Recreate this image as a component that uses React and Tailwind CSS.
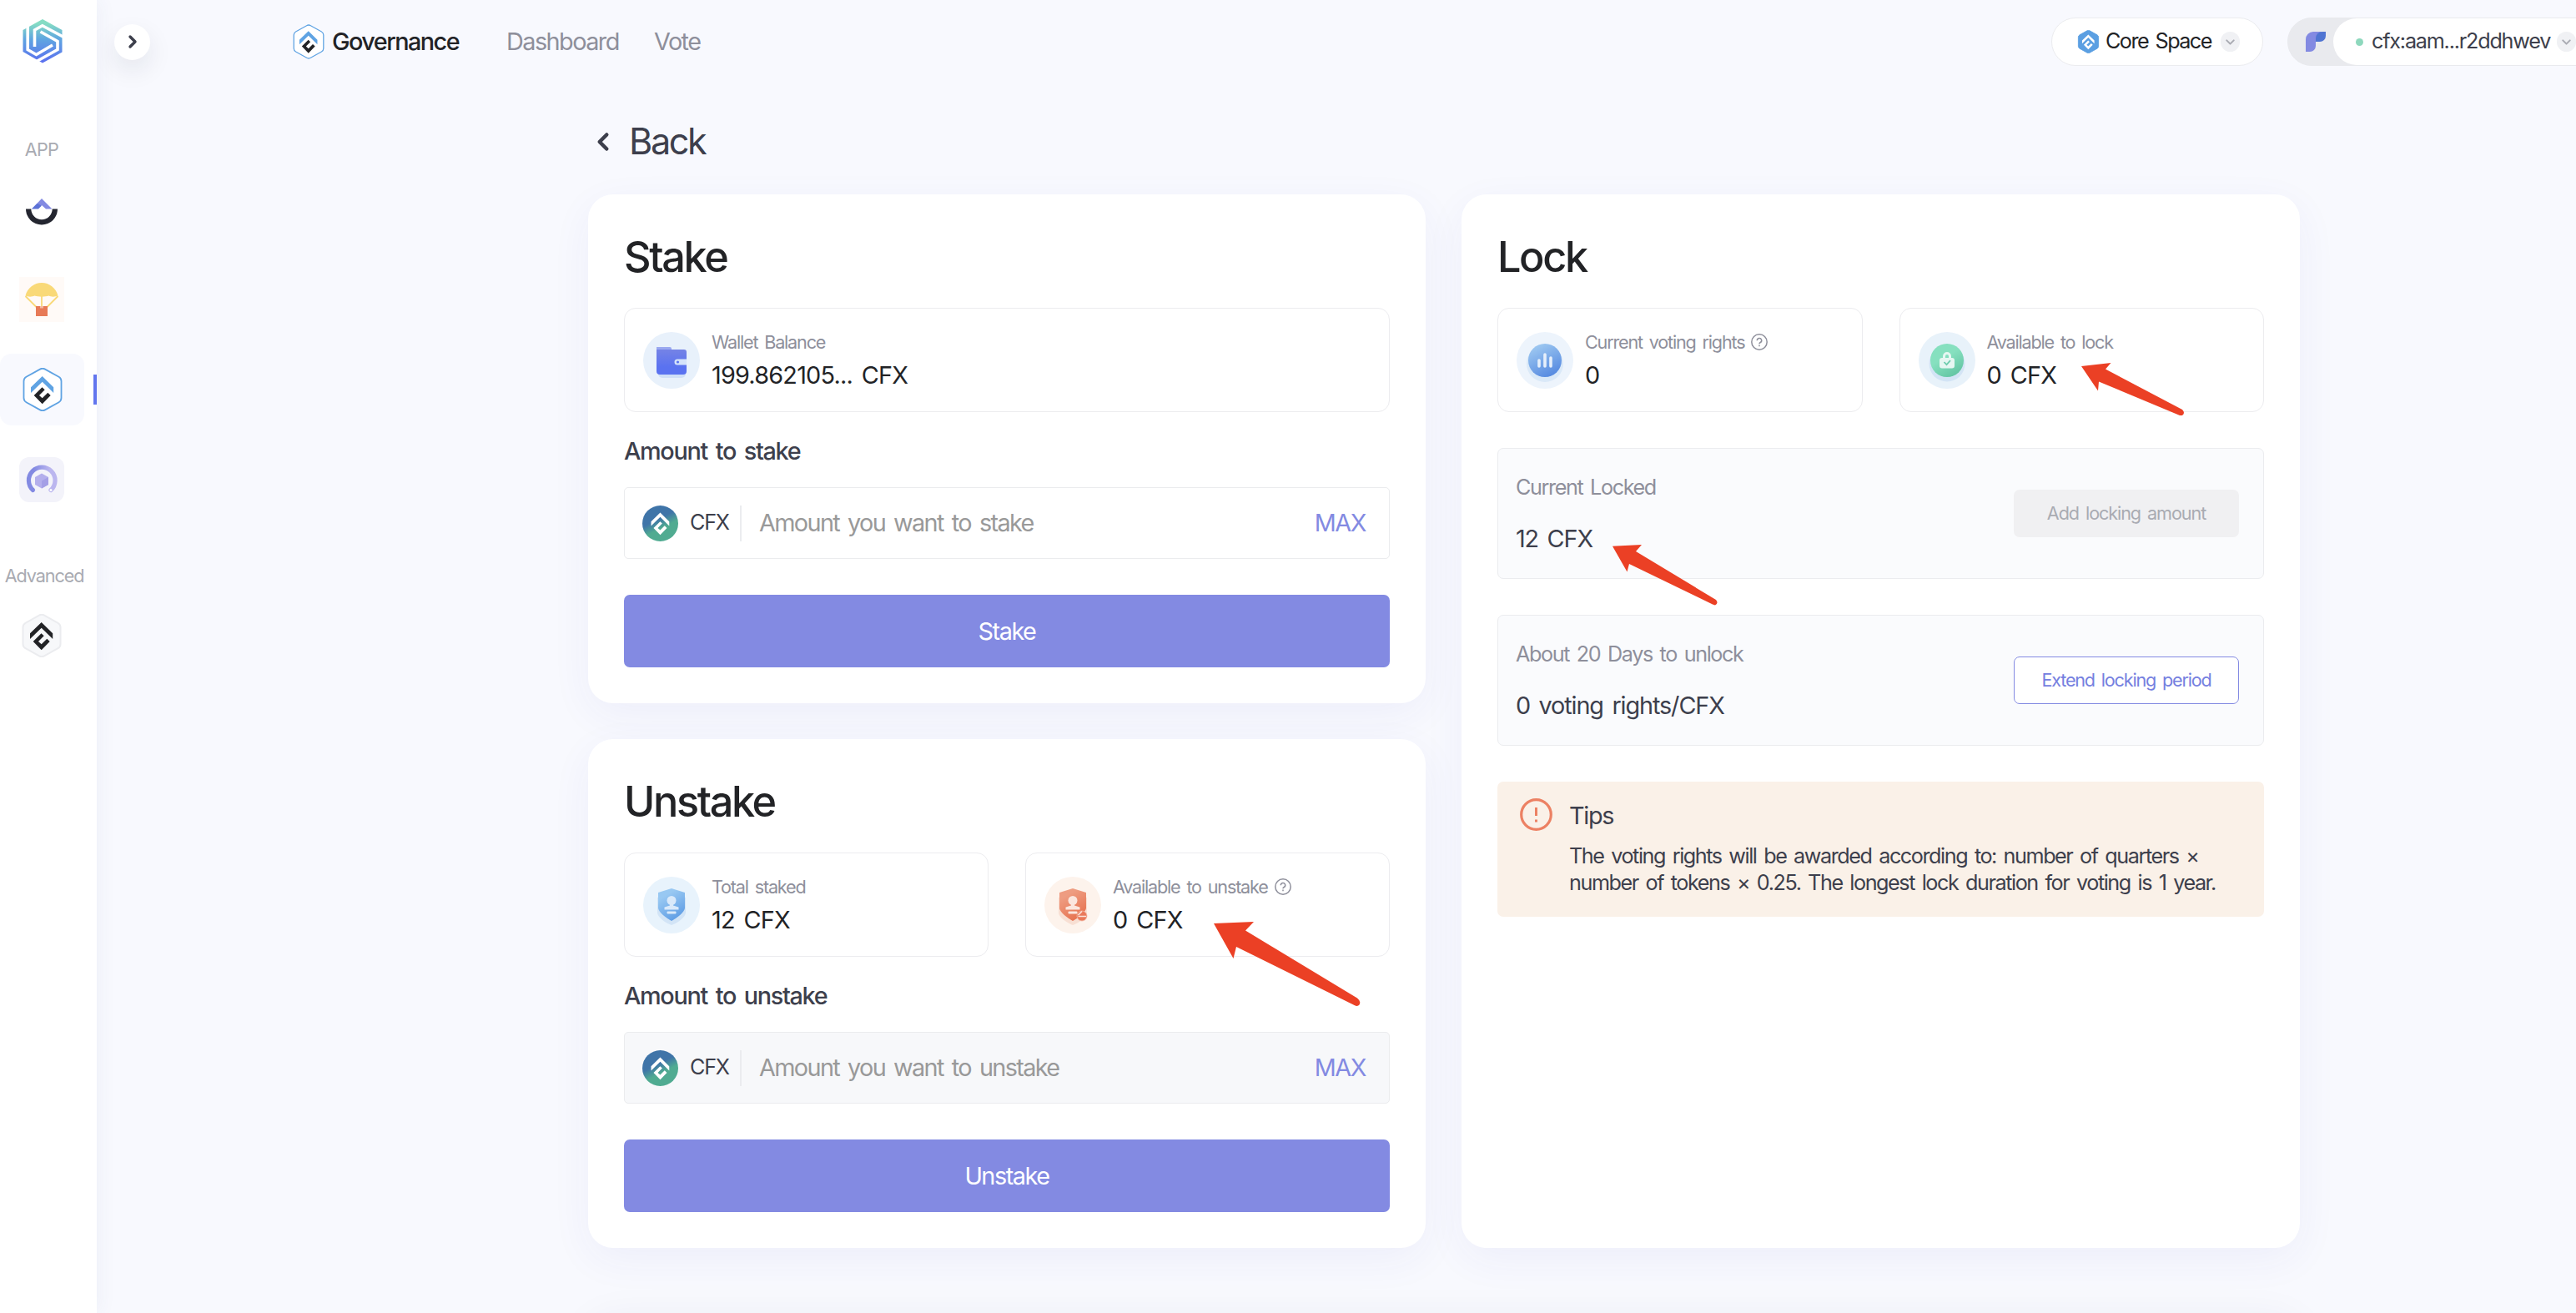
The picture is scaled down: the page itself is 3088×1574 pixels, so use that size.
import React from "react";
import { ChevronDown, ChevronLeft, ChevronRight } from "lucide-react";

// --------------------
// ICONS
// --------------------
const HEX = "M21 1.6a6 6 0 0 1 6 0l16.500 9.200a6 6 0 0 1 3 5.200v20a6 6 0 0 1-3 5.200l-16.500 9.200a6 6 0 0 1-6 0l-16.500-9.200a6 6 0 0 1-3-5.200v-20a6 6 0 0 1 3-5.200z";

function Mark({ top, bottom }) {
  return (
    <>
      <path d="M23.700 10 37.200 23.300V30L23.700 16.700 10 30v-6.700z" fill={top} />
      <path d="m23.500 23.300-9.800 9.700 10 10.300 10-10.300-3.400-3.300-6.600 6.600-3.700-3.300 6.700-6.700z" fill={bottom} />
    </>
  );
}

const HexLogo = ({ className, stroke, fill, top, bottom, strokeWidth = 1.6 }) => (
  <svg viewBox="0 0 48 52" className={className}>
    <path d={HEX} fill={fill} stroke={stroke} strokeWidth={strokeWidth} />
    <Mark top={top} bottom={bottom} />
  </svg>
);

const BrandLogo = () => (
  <svg viewBox="0 0 48 53" className="w-12 h-[53px]" fill="none">
    <defs>
      <linearGradient id="brand" x1="0" y1="0" x2="0" y2="1">
        <stop offset="0.1" stopColor="#85dcc4" />
        <stop offset="0.45" stopColor="#5fa6e0" />
        <stop offset="1" stopColor="#5b6ef0" />
      </linearGradient>
    </defs>
    <path d="M24 0 47.500 13v26.500L24 52.500.5 39V13z" fill="url(#brand)" />
    <g stroke="#fff" strokeWidth="3.600">
      <path d="M6.200 8v28.500l10.300 6L36 31" />
      <path d="M14.500 33V13l9.300-5.300L48.500 21" />
      <path d="M21.500 15 42 26.500v10L16.500 50.800" />
    </g>
  </svg>
);

const BowlIcon = () => (
  <svg viewBox="0 0 38 32" className="w-[38px] h-8">
    <path d="M7 12.500 19 0l12.500 12.500H24L19 8z" fill="#838ae2" />
    <path d="M7 12.500 13.500 6 19 8.500l-4 4z" fill="#5c72d6" />
    <path d="M0 12.500a19 19 0 0 0 38 0h-6.300a12.700 12.700 0 0 1-25.400 0z" fill="#242630" />
  </svg>
);

const AirdropIcon = () => (
  <svg viewBox="0 0 54 54" className="w-[54px] h-[54px]">
    <path d="M0 0h54v54H0z" fill="#fffaf7" />
    <path d="M7.500 23 20.500 36M46.500 23 33.500 36M27 20v16" stroke="#f9d978" strokeWidth="1.800" />
    <path d="M7.500 22.500C10 13 18 7 27 7s17 6 19.500 15.500c-3 1.500-9 1.500-11 0-4 1.500-13 1.500-17 0-3 1.500-8 1.500-11 0z" fill="#f9d978" />
    <path d="M20 35h14v12H20z" fill="#e77a57" />
    <path d="M25 35h4v2.500h-4z" fill="#f4b7a0" />
  </svg>
);

const GaugeIcon = () => (
  <svg viewBox="0 0 54 54" className="w-[54px] h-[54px]">
    <rect width="54" height="54" rx="12" fill="#f3f3fa" />
    <defs>
      <linearGradient id="gauge" x1="0" x2="1">
        <stop offset="0.2" stopColor="#838ae2" />
        <stop offset="0.8" stopColor="#bbb6ef" />
      </linearGradient>
    </defs>
    <path d="M16.500 39.500A15.800 15.800 0 1 1 38 39.500" stroke="url(#gauge)" strokeWidth="5.200" strokeLinecap="round" fill="none" />
    <circle cx="38" cy="39.500" r="1.500" fill="#fff" />
    <path d="m27 19.500 8 4.500v9l-8 4.500-8-4.500v-9z" fill="#b4afec" />
    <path d="M27 28.500 35 24v9l-8 4.500z" fill="#a49fe6" />
  </svg>
);

const CoinIcon = () => (
  <svg viewBox="0 0 43 43" className="w-[43px] h-[43px] shrink-0">
    <defs>
      <linearGradient id="coin" x1="0.3" y1="0.1" x2="0.7" y2="0.9">
        <stop offset="0.35" stopColor="#3f74a8" />
        <stop offset="0.65" stopColor="#50ab91" />
      </linearGradient>
    </defs>
    <circle cx="21.500" cy="21.500" r="21.500" fill="url(#coin)" />
    <g transform="translate(2.500 .5) scale(.8)">
      <Mark top="#fff" bottom="#fff" />
    </g>
  </svg>
);

const FluentIcon = () => (
  <svg viewBox="0 0 24 24" className="w-6 h-6">
    <path d="M0 24V9a9 9 0 0 1 9-9h10v6a6 6 0 0 1-6 6h-1v5a7 7 0 0 1-7 7z" fill="#838ae2" />
    <path d="M24 0v5a7 7 0 0 1-7 7h-5V8a8 8 0 0 1 8-8z" fill="#4f74d2" />
  </svg>
);

const WalletIcon = () => (
  <svg viewBox="0 0 68 68" className="w-[68px] h-[68px] shrink-0">
    <defs>
      <linearGradient id="wallet" x1="0" y1="0" x2="0" y2="1">
        <stop stopColor="#7583e6" />
        <stop offset="0.7" stopColor="#5a72f0" />
      </linearGradient>
    </defs>
    <circle cx="34" cy="34" r="34" fill="#e8f1fb" />
    <rect x="18" y="26" width="33" height="29" rx="5" fill="#cfdff7" />
    <path d="M16 18h16a2 2 0 0 1 2 2v6H16z" fill="#9aa8f0" />
    <path d="M16 21h33a3 3 0 0 1 3 3v23a4 4 0 0 1-4 4H20a4 4 0 0 1-4-4z" fill="url(#wallet)" />
    <path d="M52 32.500H41a3.500 3.500 0 0 0 0 7h11z" fill="#d5e3fa" />
    <circle cx="41.500" cy="36" r="1.600" fill="#5a72f0" />
  </svg>
);

function ShieldIcon({ id, bg, shadow, from, to, glyph, badge }) {
  return (
    <svg viewBox="0 0 68 68" className="w-[68px] h-[68px] shrink-0">
      <defs>
        <linearGradient id={id} x1="0.2" y1="0" x2="0.7" y2="1">
          <stop offset="0.2" stopColor={from} />
          <stop offset="1" stopColor={to} />
        </linearGradient>
      </defs>
      <circle cx="34" cy="34" r="34" fill={bg} />
      <path d="M34 20 51 25v18c0 6-11 13-17 15-6-2-17-9-17-15V25z" fill={shadow} />
      <path d="m34 14 16 5v18.500c0 4.500-9.500 12-16 15.500-6.500-3.500-16-11-16-15.500V19z" fill={`url(#${id})`} />
      <circle cx="34" cy="28.500" r="5.500" fill={glyph} />
      <path d="M32 31h4v3.500l6.500 2V39.500h-17V36.500l6.500-2z" fill={glyph} />
      <rect x="28.500" y="41.500" width="11" height="3" rx="1" fill={glyph} />
      {badge && (
        <>
          <circle cx="45" cy="47" r="6" fill="#e9795a" stroke="#f3b8a4" strokeWidth="0.800" />
          <path d="m40.500 46 4.500-4.500M40.500 47.500h9.500" stroke="#fbe3da" strokeWidth="1.600" />
        </>
      )}
    </svg>
  );
}

const VotesIcon = () => (
  <svg viewBox="0 0 68 68" className="w-[68px] h-[68px] shrink-0">
    <defs>
      <linearGradient id="votes" x1="0.2" y1="0" x2="0.7" y2="1">
        <stop offset="0.1" stopColor="#9ac5f0" />
        <stop offset="1" stopColor="#5488e0" />
      </linearGradient>
    </defs>
    <circle cx="34" cy="34" r="34" fill="#edf4fc" />
    <circle cx="34" cy="38" r="22" fill="#dae9f8" />
    <circle cx="34" cy="34" r="20" fill="url(#votes)" />
    <path d="M27 34v7M34 27v14M41 31v10" stroke="#e6effb" strokeWidth="3.600" strokeLinecap="round" />
  </svg>
);

const LockIcon = () => (
  <svg viewBox="0 0 68 68" className="w-[68px] h-[68px] shrink-0">
    <defs>
      <linearGradient id="lock" x1="0.2" y1="0" x2="0.8" y2="1">
        <stop offset="0.4" stopColor="#86e0bf" />
        <stop offset="1" stopColor="#5fc2a0" />
      </linearGradient>
    </defs>
    <circle cx="34" cy="34" r="34" fill="#e8f2fa" />
    <circle cx="34" cy="38" r="21.500" fill="#d3e4f5" />
    <circle cx="34" cy="34" r="20" fill="url(#lock)" />
    <path d="M30.500 32v-3a3.500 3.500 0 0 1 7 0v3" stroke="#e6f7f2" strokeWidth="3" fill="none" />
    <rect x="25" y="31" width="18" height="12.500" rx="3" fill="#e6f7f2" />
    <path d="m30.500 36 3 3.200 4.500-5" stroke="#6fcdae" strokeWidth="1.800" fill="none" />
  </svg>
);

const HelpIcon = () => (
  <svg viewBox="0 0 20 20" className="w-5 h-5 shrink-0" fill="none" stroke="#8e8f9b" strokeWidth="1.500">
    <circle cx="10" cy="10" r="9.200" />
    <path d="M7.300 8.200a2.700 2.700 0 1 1 4 2.300c-.9.5-1.300.9-1.300 1.700" />
    <path d="M10 13.600v1.600" />
  </svg>
);

const TipsIcon = () => (
  <svg viewBox="0 0 39 39" className="w-[39px] h-[39px] shrink-0" fill="none" stroke="#ec8163">
    <circle cx="19.500" cy="19.500" r="17.800" strokeWidth="3.200" />
    <path d="M19.500 11v10M19.500 25.500v3" strokeWidth="3" />
  </svg>
);

const Caret = () => (
  <span className="w-[23px] h-6 rounded-full bg-[#f0f1f4] flex items-center justify-center shrink-0">
    <ChevronDown size={17} strokeWidth={2.8} color="#a9abb2" />
  </span>
);

// --------------------
// BUILDING BLOCKS
// --------------------
const Card = ({ title, className, children }) => (
  <section
    className={`bg-white rounded-[30px] p-[43px] shadow-[0_14px_50px_rgba(60,60,190,0.055)] flex flex-col ${className || ""}`}
  >
    <h2 className="text-[50.4px] leading-[63px] font-medium text-[#222326] mb-[30px] tracking-[-0.047em]">
      {title}
    </h2>
    {children}
  </section>
);

const Stat = ({ icon, label, value, help }) => (
  <div className="flex-1 h-[125px] border border-[#ececef] rounded-[14px] flex items-center gap-[14px] pl-[22px]">
    {icon}
    <div>
      <div className="flex items-center gap-2 text-[21.6px] leading-[36px] text-[#8e8f9b] tracking-[-0.055em] [word-spacing:0.14em]">
        {label}
        {help && <HelpIcon />}
      </div>
      <div className="text-[28.800px] leading-[43px] text-[#222326] tracking-[-0.027em] [word-spacing:0.12em]">
        {value}
      </div>
    </div>
  </div>
);

const AmountForm = ({ label, placeholder, action, disabled }) => (
  <>
    <div className="mt-[29px] mb-[25px] text-[28.800px] leading-[36px] font-medium text-[#3d3f4c] tracking-[-0.046em] [word-spacing:0.12em]">
      {label}
    </div>
    <div
      className={`h-[86px] border border-[#ebecee] rounded-[5px] flex items-center pl-[21px] pr-[28px] ${
        disabled ? "bg-[#f7f8fa]" : "bg-white"
      }`}
    >
      <CoinIcon />
      <span className="ml-[14px] w-[60px] text-[25.200px] text-[#3d3f4c] tracking-[-0.05em]">CFX</span>
      <span className="w-[2px] h-[43px] bg-[#ebecef]" />
      <span className="ml-[21px] flex-1 text-[28.800px] text-[#999999] tracking-[-0.056em] [word-spacing:0.12em]">
        {placeholder}
      </span>
      <span className="text-[28.800px] text-[#838ae2] tracking-[-0.05em]">MAX</span>
    </div>
    <button className="mt-[43px] h-[87px] rounded-[7px] bg-[#838ae2] text-white text-[28.800px] tracking-[-0.05em]">
      {action}
    </button>
  </>
);

const LockRow = ({ label, value, children }) => (
  <div className="mt-[43px] h-[157px] border border-[#ebecef] rounded-[7px] bg-[#fafbfd] flex items-center justify-between pl-[21px] pr-[29px]">
    <div>
      <div className="text-[25.200px] leading-[36px] text-[#8e8f9b] tracking-[-0.055em] [word-spacing:0.12em]">
        {label}
      </div>
      <div className="mt-[26px] mb-[2px] text-[28.800px] leading-[36px] text-[#3d3f4c] tracking-[-0.038em] [word-spacing:0.12em]">
        {value}
      </div>
    </div>
    {children}
  </div>
);

const Sidebar = () => (
  <aside className="relative z-10 w-[116px] h-full bg-white shrink-0 shadow-[4px_0_20px_rgba(60,70,140,0.05)]">
    <div className="w-[100px] flex flex-col items-center">
      <div className="mt-[23px] ml-[2px]">
        <BrandLogo />
      </div>
      <div className="mt-[85px] leading-[36px] h-[36px] text-[21.6px] text-[#a9abb2] tracking-[-0.03em]">APP</div>
      <div className="mt-[41px]">
        <BowlIcon />
      </div>
      <div className="mt-[62px]">
        <AirdropIcon />
      </div>
    </div>
    <div className="mt-[38px] flex items-center justify-between">
      <div className="w-[101px] h-[86px] rounded-[14px] bg-[#f8f9fe] flex items-center justify-center">
        <HexLogo className="w-12 h-[52px]" fill="#fff" stroke="#5fa3e3" top="#5fa3e3" bottom="#222326" strokeWidth={1.800} />
      </div>
      <span className="w-1 h-9 bg-[#6276ee]" />
    </div>
    <div className="w-[100px] flex flex-col items-center">
      <div className="mt-[38px]">
        <GaugeIcon />
      </div>
      <div className="mt-[70px] h-[36px] leading-[36px] pl-[6px] text-[21.6px] text-[#a9abb2] tracking-[-0.05em]">
        Advanced
      </div>
      <HexLogo className="mt-[28px] w-12 h-[52px]" fill="#f7f8fa" stroke="#ebecef" top="#222326" bottom="#222326" strokeWidth={2} />
    </div>
  </aside>
);

const Header = () => (
  <header className="h-[100px] flex items-center whitespace-nowrap text-[28.800px] tracking-[-0.053em]">
    <span className="ml-[21px] w-[43px] h-[43px] rounded-full bg-white flex items-center justify-center shadow-[0_12px_30px_rgba(20,30,60,0.09)]">
      <ChevronRight size={24} strokeWidth={3.4} color="#3d3f4c" />
    </span>
    <HexLogo className="ml-[171px] w-[38px] h-[42px]" fill="#fff" stroke="#5fa3e3" top="#5fa3e3" bottom="#222326" />
    <span className="ml-[9px] w-[209px] font-medium text-[#222326]">Governance</span>
    <span className="w-[177px] text-[#8e8f9b]">Dashboard</span>
    <span className="flex-1 text-[#8e8f9b]">Vote</span>
    <div className="w-[254px] h-[58px] shrink-0 rounded-full bg-white border border-[#ebecef] flex items-center pl-[30px] text-[25.200px] text-[#222326]">
      <HexLogo className="w-[27px] h-[28px] mr-[7px]" fill="#5b9fe2" stroke="#5b9fe2" top="#fff" bottom="#fff" />
      <span className="flex-1 tracking-[-0.062em] [word-spacing:0.12em]">Core Space</span>
      <span className="mr-[27px] flex">
        <Caret />
      </span>
    </div>
    <div className="ml-[29px] -mr-[30px] w-[376px] h-[58px] shrink-0 rounded-full bg-[#e9eaee] border border-[#e9eaee] flex items-center pl-[21px]">
      <FluentIcon />
      <div className="ml-[9px] flex-1 h-full rounded-full bg-white flex items-center pl-[27px] text-[25.200px] text-[#3d3f4c]">
        <span className="w-[9px] h-[9px] rounded-full bg-[#8ed8bd] mr-[10px]" />
        <span className="w-[222px] tracking-[-0.048em]">cfx:aam...r2ddhwev</span>
        <Caret />
      </div>
    </div>
  </header>
);

// Red pointers drawn over the cards
const Arrows = () => (
  <svg viewBox="0 0 3088 1574" className="absolute inset-0 z-20 w-full h-full pointer-events-none" fill="#eb4025">
    <path d="M1455 1107l48-2-10 10.500 134 81q5 4 2.500 8-2 2.500-6 .5L1482 1135l-3.500 14z" />
    <path d="M1933 654.700l35-1.700-7 8 96 58q3.500 4-1 6.500l-3-1L1953 676l-2.500 9.500z" />
    <path d="M2495 439l35.500-4-6.500 7.500 92 48.500q4 4 0 7h-3L2516 457.500l-1 11z" />
  </svg>
);

export default function App() {
  return (
    <div className="relative w-[3088px] h-[1574px] overflow-hidden flex bg-[#f8f9fe] font-['Inter',sans-serif]">
      <Sidebar />
      <main className="flex-1 min-w-0">
        <Header />
        <div className="ml-[589px] w-[2052px]">
          <div className="mt-[48px] h-[43px] flex items-center text-[43.200px] leading-[43px] text-[#3d3f4c] tracking-[-0.055em]">
            <ChevronLeft size={34} strokeWidth={3.2} className="ml-[1px] mr-[14px]" />
            Back
          </div>
          <div className="mt-[42px] flex gap-[43px] h-[1263px]">
            <div className="w-[1004px] flex flex-col gap-[43px]">
              <Card title="Stake" className="h-[610px]">
                <div className="flex">
                  <Stat icon={<WalletIcon />} label="Wallet Balance" value="199.862105... CFX" />
                </div>
                <AmountForm label="Amount to stake" placeholder="Amount you want to stake" action="Stake" />
              </Card>
              <Card title="Unstake" className="h-[610px]">
                <div className="flex gap-[44px]">
                  <Stat
                    icon={<ShieldIcon id="staked" bg="#e8f3fc" shadow="#d2e4f6" from="#98c8f2" to="#5c9be4" glyph="#d9e9fa" />}
                    label="Total staked"
                    value="12 CFX"
                  />
                  <Stat
                    icon={<ShieldIcon id="unstake" bg="#fdf3ec" shadow="#f8dfd3" from="#ee9c81" to="#e66f4c" glyph="#fbe6de" badge />}
                    label="Available to unstake"
                    value="0 CFX"
                    help
                  />
                </div>
                <AmountForm
                  label="Amount to unstake"
                  placeholder="Amount you want to unstake"
                  action="Unstake"
                  disabled
                />
              </Card>
            </div>

            <Card title="Lock" className="w-[1005px]">
              <div className="flex gap-[44px]">
                <Stat icon={<VotesIcon />} label="Current voting rights" value="0" help />
                <Stat icon={<LockIcon />} label="Available to lock" value="0 CFX" />
              </div>
              <LockRow label="Current Locked" value="12 CFX">
                <button className="w-[270px] h-[57px] rounded-[7px] bg-[#f0f0f2] text-[21.6px] text-[#a9abb2] tracking-[-0.05em] [word-spacing:0.14em]">
                  Add locking amount
                </button>
              </LockRow>
              <LockRow label="About 20 Days to unlock" value="0 voting rights/CFX">
                <button className="w-[270px] h-[57px] rounded-[7px] bg-white border-[1.5px] border-[#838ae2] text-[21.6px] text-[#7580e0] tracking-[-0.055em] [word-spacing:0.14em]">
                  Extend locking period
                </button>
              </LockRow>
              <div className="mt-[43px] h-[162px] rounded-[7px] bg-[#faf1e8] flex items-start pl-[27px] pt-[20px] gap-[20px] text-[#3d3f4c]">
                <TipsIcon />
                <div className="pt-[3px]">
                  <div className="text-[28.800px] leading-[36px] tracking-[-0.045em]">Tips</div>
                  <p className="mt-[14px] text-[25.200px] leading-[32px] whitespace-nowrap tracking-[-0.057em] [word-spacing:0.12em]">
                    The voting rights will be awarded according to: number of quarters ×
                    <br />
                    number of tokens × 0.25. The longest lock duration for voting is 1 year.
                  </p>
                </div>
              </div>
            </Card>
          </div>
          <div className="mt-[86px] h-[200px] rounded-[30px] bg-white shadow-[0_0_50px_rgba(40,50,90,0.06)]" />
        </div>
      </main>
      <Arrows />
    </div>
  );
}
